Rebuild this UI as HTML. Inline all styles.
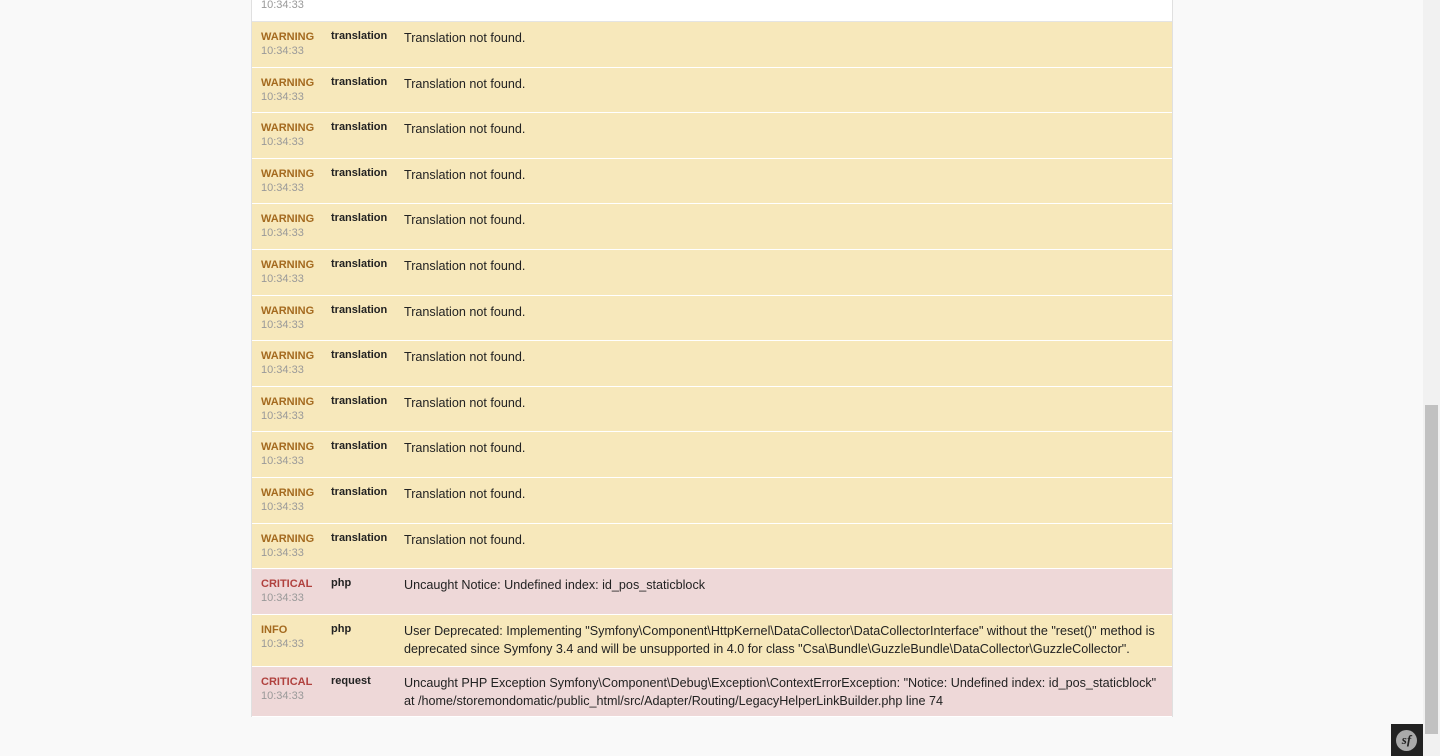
<!DOCTYPE html>
<html><head><style>
body{margin:0;background:#f9f9f9;font-family:"Liberation Sans",Arial,sans-serif;width:1440px;height:756px;overflow:hidden;position:relative}
.t{position:absolute;left:251px;top:0;width:920px;border-left:1px solid #e0e0e0;border-right:1px solid #e0e0e0}
.r{position:relative;border-bottom:1px solid #fff;box-sizing:border-box}
.w{background:#f7e8bb;height:45.6px}
.c{background:#eed8d8;height:45.6px}
.i{background:#f7e8bb;height:52px}
.wh{background:#fff;height:22px;border-bottom:1px solid #e4e4e4}
.l{position:absolute;left:9px;top:8px;font-size:11px;font-weight:bold;line-height:14px}
.w .l,.i .l{color:#a46a1f}.c .l{color:#b0413e}
.tm{position:absolute;left:9px;top:23px;font-size:11px;color:#999}
.ch{position:absolute;left:79px;top:8px;font-size:11px;font-weight:bold;color:#222}
.m{position:absolute;left:152px;top:7px;font-size:12.6px;color:#222;line-height:18px;width:760px}
.sb{position:absolute;left:1423px;top:0;width:17px;height:756px;background:#f1f1f1}
.th{position:absolute;left:1425px;top:405px;width:13px;height:329px;background:#c1c1c1}
.sf{position:absolute;left:1391px;top:724px;width:32px;height:32px;background:#222}
.sf div{position:absolute;left:5px;top:6px;width:21px;height:21px;border-radius:50%;background:#aaa;color:#222;font:italic bold 13px "Liberation Serif",serif;text-align:center;line-height:20px}
</style></head><body>
<div class="t">
<div class="r wh"><div class="tm" style="top:-1px">10:34:33</div></div>
<div class="r w"><div class="l">WARNING</div><div class="tm">10:34:33</div><div class="ch">translation</div><div class="m">Translation not found.</div></div>
<div class="r w"><div class="l">WARNING</div><div class="tm">10:34:33</div><div class="ch">translation</div><div class="m">Translation not found.</div></div>
<div class="r w"><div class="l">WARNING</div><div class="tm">10:34:33</div><div class="ch">translation</div><div class="m">Translation not found.</div></div>
<div class="r w"><div class="l">WARNING</div><div class="tm">10:34:33</div><div class="ch">translation</div><div class="m">Translation not found.</div></div>
<div class="r w"><div class="l">WARNING</div><div class="tm">10:34:33</div><div class="ch">translation</div><div class="m">Translation not found.</div></div>
<div class="r w"><div class="l">WARNING</div><div class="tm">10:34:33</div><div class="ch">translation</div><div class="m">Translation not found.</div></div>
<div class="r w"><div class="l">WARNING</div><div class="tm">10:34:33</div><div class="ch">translation</div><div class="m">Translation not found.</div></div>
<div class="r w"><div class="l">WARNING</div><div class="tm">10:34:33</div><div class="ch">translation</div><div class="m">Translation not found.</div></div>
<div class="r w"><div class="l">WARNING</div><div class="tm">10:34:33</div><div class="ch">translation</div><div class="m">Translation not found.</div></div>
<div class="r w"><div class="l">WARNING</div><div class="tm">10:34:33</div><div class="ch">translation</div><div class="m">Translation not found.</div></div>
<div class="r w"><div class="l">WARNING</div><div class="tm">10:34:33</div><div class="ch">translation</div><div class="m">Translation not found.</div></div>
<div class="r w"><div class="l">WARNING</div><div class="tm">10:34:33</div><div class="ch">translation</div><div class="m">Translation not found.</div></div>
<div class="r c"><div class="l">CRITICAL</div><div class="tm">10:34:33</div><div class="ch">php</div><div class="m">Uncaught Notice: Undefined index: id_pos_staticblock</div></div>
<div class="r i"><div class="l">INFO</div><div class="tm">10:34:33</div><div class="ch">php</div><div class="m">User Deprecated: Implementing "Symfony\Component\HttpKernel\DataCollector\DataCollectorInterface" without the "reset()" method is deprecated since Symfony 3.4 and will be unsupported in 4.0 for class "Csa\Bundle\GuzzleBundle\DataCollector\GuzzleCollector".</div></div>
<div class="r c" style="height:50px"><div class="l">CRITICAL</div><div class="tm">10:34:33</div><div class="ch">request</div><div class="m">Uncaught PHP Exception Symfony\Component\Debug\Exception\ContextErrorException: "Notice: Undefined index: id_pos_staticblock" at /home/storemondomatic/public_html/src/Adapter/Routing/LegacyHelperLinkBuilder.php line 74</div></div>
</div>
<div class="sb"></div><div class="th"></div>
<div class="sf"><div>sf</div></div>
</body></html>
